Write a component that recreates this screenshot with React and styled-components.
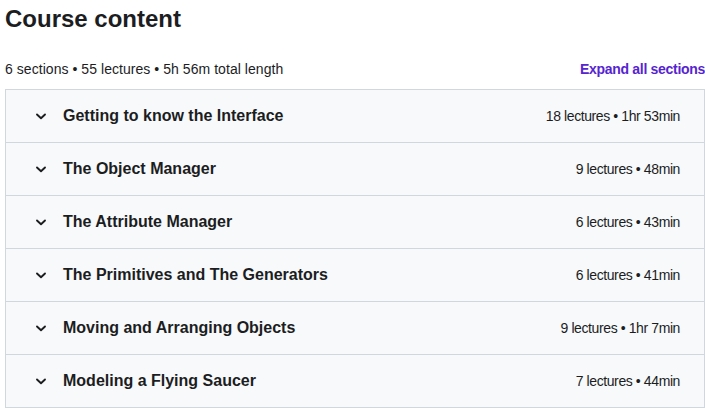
import React from "react";
import styled, { createGlobalStyle } from "styled-components";

const GlobalStyle = createGlobalStyle`
  body {
    margin: 0;
    background: #ffffff;
    font-family: "Liberation Sans", Arial, sans-serif;
    color: #1c1d1f;
  }
`;

const StyledPage = styled.div`
  width: 700px;
  padding: 4px 0 0 5px;
`;

const StyledTitle = styled.h2`
  font-family: "Liberation Sans", Arial, sans-serif;
  font-size: 24px;
  font-weight: 700;
  letter-spacing: 0;
  color: #1c1d1f;
  margin: 0;
  line-height: 30px;
`;

const StyledSummaryBar = styled.div`
  display: flex;
  justify-content: space-between;
  align-items: center;
  margin-top: 20px;
  height: 30px;
  margin-bottom: 5px;
`;

const StyledSummary = styled.span`
  font-size: 14px;
  color: #1c1d1f;
  letter-spacing: 0.05px;
`;

const StyledExpand = styled.button`
  background: none;
  border: none;
  padding: 0;
  font-family: "Liberation Sans", Arial, sans-serif;
  font-size: 14px;
  font-weight: 700;
  letter-spacing: -0.3px;
  color: #5624d0;
  cursor: pointer;
`;

const StyledAccordion = styled.div`
  border: 1px solid #d1d7dc;
  border-bottom: none;
`;

const StyledSection = styled.div`
  display: flex;
  align-items: center;
  height: 52px;
  padding: 0 24px 0 28px;
  background-color: #f7f9fa;
  border-bottom: 1px solid #d1d7dc;
`;

const StyledChevron = styled.svg`
  width: 14px;
  height: 14px;
  flex-shrink: 0;
  margin-right: 15px;
`;

const StyledSectionTitle = styled.span`
  flex: 1;
  font-size: 16px;
  font-weight: 700;
  letter-spacing: 0;
  color: #1c1d1f;
`;

const StyledMeta = styled.span`
  font-size: 14px;
  letter-spacing: -0.4px;
  color: #1c1d1f;
`;

const sections = [
  { title: "Getting to know the Interface", lectures: 18, length: "1hr 53min" },
  { title: "The Object Manager", lectures: 9, length: "48min" },
  { title: "The Attribute Manager", lectures: 6, length: "43min" },
  { title: "The Primitives and The Generators", lectures: 6, length: "41min" },
  { title: "Moving and Arranging Objects", lectures: 9, length: "1hr 7min" },
  { title: "Modeling a Flying Saucer", lectures: 7, length: "44min" },
];

function Chevron() {
  return (
    <StyledChevron viewBox="0 0 14 14">
      <polyline
        points="3,5.5 7,9.2 11,5.5"
        fill="none"
        stroke="#1c1d1f"
        strokeWidth="1.9"
        strokeLinecap="round"
        strokeLinejoin="round"
      />
    </StyledChevron>
  );
}

export default function App() {
  return (
    <StyledPage>
      <GlobalStyle />
      <StyledTitle>Course content</StyledTitle>
      <StyledSummaryBar>
        <StyledSummary>6 sections • 55 lectures • 5h 56m total length</StyledSummary>
        <StyledExpand>Expand all sections</StyledExpand>
      </StyledSummaryBar>
      <StyledAccordion>
        {sections.map((section) => (
          <StyledSection key={section.title}>
            <Chevron />
            <StyledSectionTitle>{section.title}</StyledSectionTitle>
            <StyledMeta>
              {section.lectures} lectures • {section.length}
            </StyledMeta>
          </StyledSection>
        ))}
      </StyledAccordion>
    </StyledPage>
  );
}
